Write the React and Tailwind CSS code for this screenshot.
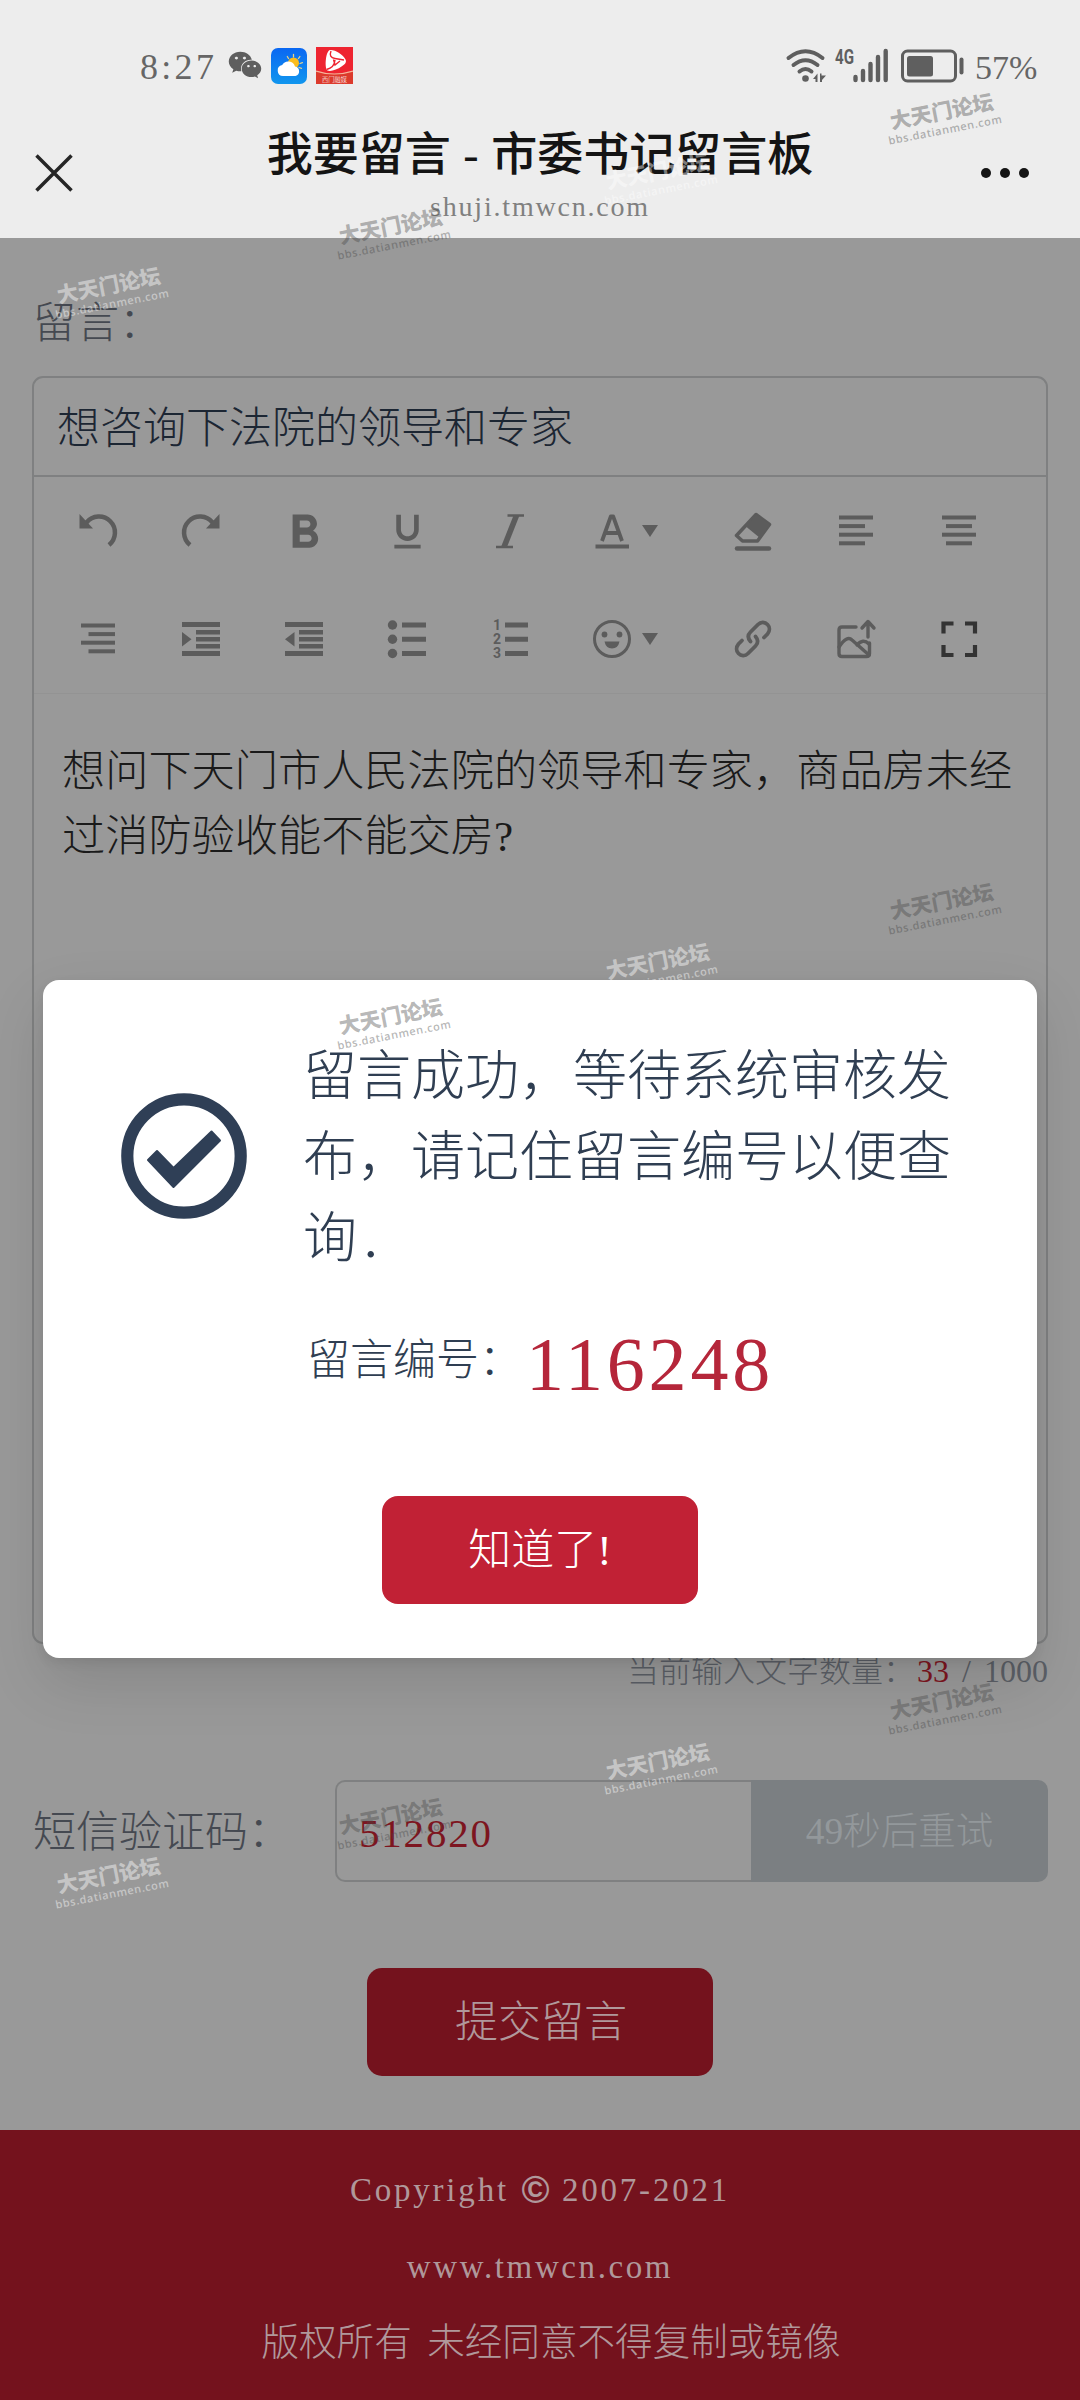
import React from "react";
import { FaWeixin } from "react-icons/fa";
import { MdFormatBold, MdFormatUnderlined } from "react-icons/md";
import { Link } from "lucide-react";

const marks = [
  { x: 392, y: 233, tone: "dark" },
  { x: 392, y: 1023, tone: "dark" },
  { x: 392, y: 1823, tone: "dark" },
  { x: 943, y: 118, tone: "dark" },
  { x: 943, y: 908, tone: "dark" },
  { x: 943, y: 1708, tone: "dark" },
  { x: 110, y: 292, tone: "light" },
  { x: 110, y: 1882, tone: "light" },
  { x: 659, y: 178, tone: "light" },
  { x: 659, y: 968, tone: "light" },
  { x: 659, y: 1768, tone: "light" },
];

function Watermark({ x, y, tone }) {
  return (
    <div
      className={
        "absolute flex h-[40px] w-[108px] -translate-x-1/2 -translate-y-1/2 -rotate-[11deg] flex-col items-center justify-center whitespace-nowrap font-['Noto_Sans_CJK_SC',sans-serif] font-black " +
        (tone === "dark" ? "text-[#464646]/40" : "text-white/45")
      }
      style={{ left: x, top: y }}
    >
      <span className="text-[21px] leading-[23px]">大天门论坛</span>
      <span className="font-['Open_Sans',sans-serif] text-[11px] leading-[15px] font-semibold tracking-[0.600px]">bbs.datianmen.com</span>
    </div>
  );
}

function Ico({ children, className = "" }) {
  return (
    <svg viewBox="0 0 48 48" className={"size-12 shrink-0 " + className} fill="none">
      {children}
    </svg>
  );
}

function Bars({ rows }) {
  return (
    <Ico>
      {rows.map(([x, w], i) => (
        <rect key={i} x={x} y={8.5 + i * 8.6} width={w} height="4" fill="currentColor" />
      ))}
    </Ico>
  );
}

function Indent({ flip }) {
  return (
    <Ico>
      <path d="M5 7h38v5H5zM19 15h24v4.500H19zM19 22h24v4.500H19zM19 29h24v4.500H19zM5 36h38v5H5z" fill="currentColor" />
      <path d={flip ? "M14.500 17v14.500L5 24.200z" : "M5 17v14.500l9.500-7.300z"} fill="currentColor" />
    </Ico>
  );
}

function Caret() {
  return (
    <svg viewBox="0 0 16 12" className="h-3 w-4 shrink-0">
      <path d="M0 0h16L8 12z" fill="currentColor" />
    </svg>
  );
}

function Cell({ children, wide }) {
  return (
    <div className={"flex h-full items-center " + (wide ? "w-[140px] gap-[6px] pl-[27px]" : "w-[102.900px] justify-center")}>
      {children}
    </div>
  );
}

function StatusBar() {
  return (
    <div className="flex h-[119px] items-center pt-[12px] text-[#666666]">
      <span className="ml-[140px] w-[88px] pt-[3px] text-[36px] leading-none tracking-[3.300px]">8:27</span>
      <FaWeixin className="-mt-[1px] size-[34px] text-[#5f5f5f]" />
      <svg viewBox="0 0 36 36" className="ml-[9px] size-9">
        <defs>
          <linearGradient id="sky" x1="0" y1="0" x2="0" y2="1">
            <stop offset="0" stopColor="#0a67f2" />
            <stop offset="1" stopColor="#1196ee" />
          </linearGradient>
        </defs>
        <rect width="36" height="36" rx="7" fill="url(#sky)" />
        <g stroke="#e8d28a" strokeWidth="1.300" strokeLinecap="round">
          <path d="M22.500 9V6.500M17.500 10.500l-1.200-2M27.500 10.500l1.400-2M29 15.500l2.400-.8M28 19.500l2.500.8" />
        </g>
        <circle cx="22.500" cy="15" r="5.500" fill="#fbbd1e" />
        <path d="M12 28a5.500 5.500 0 0 1-.8-10.900 7 7 0 0 1 12.800 1.500A4.800 4.800 0 0 1 24.500 28z" fill="#fff" />
      </svg>
      <svg viewBox="0 0 37 37" className="ml-[9px] size-[37px]">
        <rect width="37" height="37" fill="#ee2430" />
        <path d="M0 24q18 6 37 0v13H0z" fill="#dc3a2c" />
        <path d="M0 24q18 6 37 0" stroke="#f6b59a" strokeWidth="1.200" fill="none" />
        <path d="M13 3.500c4-2 14 4 16.500 9 1.500 3-1 5-4 7-4 3-11 5.500-14 4-3-2-2-17 1.500-20z" fill="#fff" />
        <path d="M15 4q-2.500 6.500 4 7.500l9 1.500M10.500 22.500q8-2 8.500-9.500M17.500 12.500l1.500 5.500 5-4" stroke="#ee2430" strokeWidth="1.400" fill="none" />
        <text x="18.500" y="34.500" fontSize="7" textAnchor="middle" fill="#fff" fontFamily="Noto Sans CJK SC" textLength="25" lengthAdjust="spacingAndGlyphs">西门融媒</text>
      </svg>
      <svg viewBox="0 0 180 36" className="ml-[433px] h-9 w-[180px] overflow-visible" fill="none" stroke="#5f5f5f">
        <path d="M2.500 10q17-13.500 34 0M7.500 17q12-9.500 24 0M13.500 23.500q6-5 12 0" strokeWidth="4" strokeLinecap="round" />
        <circle cx="19.500" cy="30.500" r="3.300" fill="#5f5f5f" stroke="none" />
        <path d="M31.500 25.500v8.500h-2v-3h-2.500zM34 34v-8.500h1.500v2h4.500l-4 4.500v2z" fill="#5f5f5f" stroke="none" />
        <text x="49" y="16" fontFamily="Roboto" fontWeight="700" fontSize="20" textLength="19" lengthAdjust="spacingAndGlyphs" fill="#5f5f5f" stroke="none">4G</text>
        <path d="M69.500 29v3M77 23v9M84.500 16v16M92 9v23M99.700 3v29" strokeWidth="4.400" strokeLinecap="round" />
        <rect x="116.500" y="3" width="53" height="30" rx="5" strokeWidth="3" />
        <rect x="121" y="8" width="26" height="20.500" rx="2.500" fill="#5f5f5f" stroke="none" />
        <path d="M175.500 11.500v13" strokeWidth="4" strokeLinecap="round" />
      </svg>
      <span className="ml-[9px] pt-[4px] text-[34px] leading-none">57%</span>
    </div>
  );
}

export default function App() {
  return (
    <div className="relative flex h-[2400px] w-[1080px] flex-col overflow-hidden bg-[#999999] font-['Liberation_Serif','Noto_Sans_CJK_SC',serif] font-light whitespace-nowrap">
      <header className="h-[238px] shrink-0 bg-[#ededed]">
        <StatusBar />
        <div className="flex h-[119px] items-start justify-between pr-[51px] pl-[35px]">
          <svg viewBox="0 0 38 38" className="mt-[35px] size-[38px]" stroke="#262626" strokeWidth="3.500">
            <path d="M1.500 1.500l35 35M36.500 1.500l-35 35" />
          </svg>
          <div className="flex flex-col items-center pr-[1px] pl-[27px]">
            <h1 className="h-[66px] pt-[3px] text-[46px] leading-[66px] font-medium text-[#141414] [word-spacing:1px]">我要留言 - 市委书记留言板</h1>
            <p className="text-[28px] leading-[44px] tracking-[1.800px] text-[#808080]">shuji.tmwcn.com</p>
          </div>
          <div className="mt-[49px] flex gap-[9px]">
            <i className="size-[10px] rounded-full bg-[#141414]" />
            <i className="size-[10px] rounded-full bg-[#141414]" />
            <i className="size-[10px] rounded-full bg-[#141414]" />
          </div>
        </div>
      </header>

      <main className="flex h-[1892px] shrink-0 flex-col px-[32px] text-[43px]">
        <label className="mt-[51px] h-[64px] pt-[3px] pl-[1px] leading-[64px] text-[#454951]">留言：</label>
        <section className="mt-[23px] h-[1268px] shrink-0 rounded-[11px] border-2 border-[#7f8081]">
          <div className="h-[99px] border-b-2 border-[#7f8081] pl-[23px] leading-[101px] text-[#1c2633]">想咨询下法院的领导和专家</div>
          <div className="h-[217px] border-b border-[#939393] pl-[13px] text-[#5c5c5c]">
            <div className="flex h-[108px]">
              <Cell>
                <Ico>
                  <path d="M12.500 15.500A16 16 0 1 1 35 38" stroke="currentColor" strokeWidth="4.500" />
                  <path d="M5.500 7v14.500H19z" fill="currentColor" />
                </Ico>
              </Cell>
              <Cell>
                <Ico className="-scale-x-100">
                  <path d="M12.500 15.500A16 16 0 1 1 35 38" stroke="currentColor" strokeWidth="4.500" />
                  <path d="M5.500 7v14.500H19z" fill="currentColor" />
                </Ico>
              </Cell>
              <Cell><MdFormatBold className="mt-[4px] size-[57px]" /></Cell>
              <Cell><MdFormatUnderlined className="size-[45px]" /></Cell>
              <Cell>
                <Ico>
                  <path d="M21.500 8.500H38M10 40h17" stroke="currentColor" strokeWidth="2.600" />
                  <path d="M27.500 8.500h6L21 40h-6z" fill="currentColor" />
                </Ico>
              </Cell>
              <Cell wide>
                <Ico>
                  <path d="M14 34L22.800 9.500h2.400L34 34M17.500 26h13" stroke="currentColor" strokeWidth="3.800" strokeLinejoin="round" />
                  <path d="M7.500 39.500h33.500" stroke="currentColor" strokeWidth="3.800" />
                </Ico>
                <Caret />
              </Cell>
              <Cell>
                <Ico>
                  <path d="M27 7.500L40.500 17.500 28.500 34H13.500L7.500 28.500z" stroke="currentColor" strokeWidth="3.500" strokeLinejoin="round" />
                  <path d="M27 7L41 17.500 31 31 17.500 20z" fill="currentColor" />
                  <path d="M8 41.500h32" stroke="currentColor" strokeWidth="4.500" strokeLinecap="round" />
                </Ico>
              </Cell>
              <Cell><Bars rows={[[7, 34], [7, 26], [7, 34], [7, 26]]} /></Cell>
              <Cell><Bars rows={[[7, 34], [11, 26], [7, 34], [11, 26]]} /></Cell>
            </div>
            <div className="flex h-[108px]">
              <Cell><Bars rows={[[7, 34], [14.500, 26.500], [7, 34], [14.500, 26.500]]} /></Cell>
              <Cell><Indent /></Cell>
              <Cell><Indent flip /></Cell>
              <Cell>
                <Ico>
                  <g fill="currentColor">
                    <circle cx="9.500" cy="10" r="4.700" />
                    <circle cx="9.500" cy="24.200" r="4.700" />
                    <circle cx="9.500" cy="38.500" r="4.700" />
                    <path d="M19 7.500h24v5H19zM19 21.700h24v5H19zM19 36h24v5H19z" />
                  </g>
                </Ico>
              </Cell>
              <Cell>
                <Ico>
                  <path d="M19 7.500h23v5H19zM19 21.700h23v5H19zM19 36h23v5H19z" fill="currentColor" />
                  <g fill="currentColor" fontFamily="Roboto" fontWeight="700" fontSize="14" textAnchor="middle">
                    <text x="11" y="15">1</text>
                    <text x="11" y="29">2</text>
                    <text x="11" y="43">3</text>
                  </g>
                </Ico>
              </Cell>
              <Cell wide>
                <Ico>
                  <circle cx="24" cy="24" r="17.500" stroke="currentColor" strokeWidth="3" />
                  <circle cx="16.500" cy="19.500" r="2.900" fill="currentColor" />
                  <circle cx="31.500" cy="19.500" r="2.900" fill="currentColor" />
                  <path d="M16.500 26.500h15q-1.500 7-7.500 7t-7.500-7z" fill="currentColor" />
                </Ico>
                <Caret />
              </Cell>
              <Cell>
                <Ico>
                  <g stroke="currentColor" strokeWidth="3.800" strokeLinecap="round">
                    <path d="M21.500 26.500c-3-3.500-2.500-7 0-9.500l7.500-7.500c3-3 7-2.500 9.500 0s2.500 6.500 0 9.500L35 22.500" />
                    <path d="M26.500 21.500c3 3.500 2.500 7 0 9.500L19 38.500c-3 3-7 2.500-9.500 0S7 32 9.500 29L13 25.500" />
                  </g>
                </Ico>
              </Cell>
              <Cell>
                <Ico>
                  <g stroke="currentColor" strokeWidth="3.400" strokeLinecap="round" strokeLinejoin="round">
                    <path d="M24 12H10q-3 0-3 3v23.500q0 3 3 3h24.500q3 0 3-3V28" />
                    <path d="M7 32q8-12 13-7l17 15M25 30q6-7 12-1" />
                    <path d="M36 22V7M30 13l6-6.500 6 6.500" />
                  </g>
                </Ico>
              </Cell>
              <Cell>
                <Ico>
                  <path d="M8.500 18.500V8.500H18.500M30 8.500h10v10M40 30v10H30M18.500 40h-10V30" stroke="#333333" strokeWidth="4.200" />
                </Ico>
              </Cell>
            </div>
          </div>
          <p className="pt-[45px] pl-[28px] text-[43.200px] leading-[65px] text-[#1a1a1a]">
            想问下天门市人民法院的领导和专家，商品房未经
            <br />
            过消防验收能不能交房?
          </p>
        </section>

        <div className="h-[52px] text-right text-[32px] leading-[54px] text-[#5b5f66] [word-spacing:5px]">
          当前输入文字数量：<span className="ml-[2px] text-[#7d1520]">33</span> / 1000
        </div>

        <div className="mt-[84px] flex h-[102px] shrink-0">
          <label className="w-[303px] pl-[1px] leading-[106px] text-[#454951]">短信验证码：</label>
          <div className="w-[416px] rounded-l-[10px] border-2 border-r-0 border-[#7f8081] pl-[22px] text-[41px] leading-[102px] tracking-[1.800px] text-[#7d1520]">512820</div>
          <div className="flex-1 rounded-r-[10px] bg-[#7b7f82] text-center text-[37.500px] leading-[104px] text-[#93989b]">49秒后重试</div>
        </div>

        <button className="mt-[86px] ml-[335px] h-[108px] w-[346px] shrink-0 rounded-[15px] bg-[#74121d] pt-[3px] pl-[2px] text-[43px] font-light text-[#b0989b]">提交留言</button>
      </main>

      <footer className="flex h-[270px] shrink-0 flex-col items-center bg-[#74121d] text-[33px] text-[#b0989b]">
        <p className="mt-[30px] flex h-[60px] items-center leading-[60px] tracking-[2.800px]">
          Copyright
          <span className="mx-[10px] w-[33px] text-center font-['Liberation_Sans',sans-serif] text-[38px] font-bold tracking-normal">©</span>
          2007-2021
        </p>
        <p className="mt-[17px] h-[60px] leading-[60px] tracking-[2.600px]">www.tmwcn.com</p>
        <p className="mt-[14px] h-[64px] pl-[22px] text-[37.600px] leading-[64px] [word-spacing:6px]">版权所有 未经同意不得复制或镜像</p>
      </footer>

      <div className="absolute top-[980px] left-[43px] h-[678px] w-[994px] rounded-[16px] bg-white text-[#2f3e52] shadow-[0_24px_60px_rgba(0,0,0,0.12),0_4px_12px_rgba(0,0,0,0.08)]">
        <div className="flex">
          <svg viewBox="0 0 126 126" className="mt-[113px] ml-[78px] size-[126px] shrink-0" fill="none">
            <circle cx="63" cy="63" r="56.700" stroke="#2f3f56" strokeWidth="12.200" />
            <path d="M36 58L27 67 52.500 94 99 47.500 90.500 38.500 52.500 75z" fill="#2f3f56" stroke="#2f3f56" strokeWidth="2" strokeLinejoin="round" />
          </svg>
          <div className="mt-[57px] ml-[56px]">
            <p className="h-[243px] text-[54px] leading-[81px]">
              留言成功，等待系统审核发
              <br />
              布，请记住留言编号以便查
              <br />
              询<span className="ml-[7px]">.</span>
            </p>
            <div className="mt-[39px] ml-[4px] flex h-[88px] items-start">
              <span className="pt-[2px] text-[43px] leading-[80px]">留言编号：</span>
              <span className="ml-[4px] text-[76px] leading-[91px] tracking-[3.800px] text-[#b5263a]">116248</span>
            </div>
          </div>
        </div>
        <button className="mt-[89px] ml-[339px] h-[108px] w-[316px] rounded-[16px] bg-[#c12135] pt-[3px] text-[43px] font-light text-white">知道了!</button>
      </div>

      <div className="pointer-events-none absolute inset-0">
        {marks.map((m, i) => (
          <Watermark key={i} {...m} />
        ))}
      </div>
    </div>
  );
}
